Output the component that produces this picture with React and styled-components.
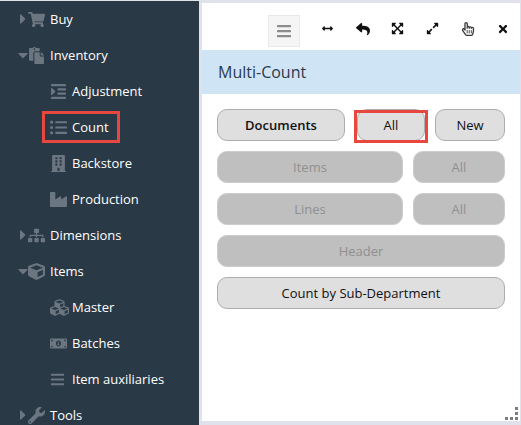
import React from 'react';
import styled, { createGlobalStyle } from 'styled-components';
import {
  FaArrowsAltH,
  FaBars,
  FaBuilding,
  FaCaretDown,
  FaCaretRight,
  FaCube,
  FaCubes,
  FaExpandAlt,
  FaExpandArrowsAlt,
  FaIndent,
  FaIndustry,
  FaListUl,
  FaMoneyBillAlt,
  FaPaste,
  FaRegHandPointer,
  FaReply,
  FaShoppingCart,
  FaSitemap,
  FaTimes,
  FaWrench,
} from 'react-icons/fa';

const GlobalStyle = createGlobalStyle`
  html, body {
    margin: 0;
    padding: 0;
    background: #dfe2ea;
  }
  *, *::before, *::after {
    box-sizing: border-box;
  }
`;

const menu = [
  { label: 'Buy', icon: FaShoppingCart, caret: 'right' },
  { label: 'Inventory', icon: FaPaste, caret: 'down' },
  { label: 'Adjustment', icon: FaIndent },
  { label: 'Count', icon: FaListUl, marked: true },
  { label: 'Backstore', icon: FaBuilding },
  { label: 'Production', icon: FaIndustry },
  { label: 'Dimensions', icon: FaSitemap, caret: 'right' },
  { label: 'Items', icon: FaCube, caret: 'down' },
  { label: 'Master', icon: FaCubes, size: 19 },
  { label: 'Batches', icon: FaMoneyBillAlt },
  { label: 'Item auxiliaries', icon: FaBars, size: 15 },
  { label: 'Tools', icon: FaWrench, caret: 'right' },
];

const tools = [
  { icon: FaArrowsAltH, size: 11 },
  { icon: FaReply, size: 14 },
  { icon: FaExpandArrowsAlt, size: 13 },
  { icon: FaExpandAlt, size: 13 },
  { icon: FaRegHandPointer, size: 14, color: '#3a3a3a' },
  { icon: FaTimes, size: 12 },
];

const App = () => {
  return (
    <Page>
      <GlobalStyle />
      <Sidebar>
        {menu.map((item) => {
          const Icon = item.icon;
          const Caret = item.caret === 'down' ? FaCaretDown : FaCaretRight;
          return (
            <MenuRow key={item.label} $child={!item.caret}>
              {item.caret && (
                <CaretSlot>
                  <Caret />
                </CaretSlot>
              )}
              <MenuEntry $marked={item.marked}>
                <IconSlot $child={!item.caret} $size={item.size}>
                  <Icon />
                </IconSlot>
                {item.label}
              </MenuEntry>
            </MenuRow>
          );
        })}
      </Sidebar>
      <Panel>
        <Toolbar>
          <MenuButton>
            <FaBars />
          </MenuButton>
          <ToolIcons>
            {tools.map((tool, i) => {
              const Icon = tool.icon;
              return (
                <ToolIcon key={i} $size={tool.size} $color={tool.color}>
                  <Icon />
                </ToolIcon>
              );
            })}
          </ToolIcons>
        </Toolbar>
        <Title>Multi-Count</Title>
        <Actions>
          <ActionRow $columns="128px 70px 70px">
            <Action $bold>Documents</Action>
            <Action $marked>All</Action>
            <Action>New</Action>
          </ActionRow>
          <ActionRow $columns="186px 92px">
            <Action disabled>Items</Action>
            <Action disabled>All</Action>
          </ActionRow>
          <ActionRow $columns="186px 92px">
            <Action disabled>Lines</Action>
            <Action disabled>All</Action>
          </ActionRow>
          <ActionRow $columns="1fr">
            <Action disabled>Header</Action>
          </ActionRow>
          <ActionRow $columns="1fr">
            <Action>Count by Sub-Department</Action>
          </ActionRow>
        </Actions>
        <Grip viewBox="0 0 13 13" aria-hidden="true">
          <rect x="10" y="0" width="3" height="3" />
          <rect x="10" y="5" width="3" height="3" />
          <rect x="5" y="10" width="3" height="3" />
          <rect x="0" y="10" width="3" height="3" />
          <rect x="10" y="10" width="3" height="3" />
        </Grip>
      </Panel>
    </Page>
  );
};

export default App;

const Page = styled.div`
  display: flex;
  width: 521px;
  height: 425px;
  overflow: hidden;
  background: #dfe2ea;
  font-family: 'Open Sans', sans-serif;
  font-size: 13px;
`;

const Sidebar = styled.nav`
  flex: 0 0 199px;
  margin-top: 1px;
  background: #2a3946;
  color: #fff;
`;

const MenuRow = styled.div`
  display: flex;
  align-items: center;
  height: 36px;
  padding-left: ${(p) => (p.$child ? '45px' : '17px')};
`;

const CaretSlot = styled.span`
  display: flex;
  justify-content: center;
  width: 11px;
  font-size: 16px;
  color: #6b7680;

  svg {
    flex: none;
  }
`;

const MenuEntry = styled.span`
  position: relative;
  display: flex;
  align-items: center;
  height: 26px;

  ${(p) =>
    p.$marked &&
    `
    &::after {
      content: '';
      position: absolute;
      left: -3px;
      top: -3px;
      width: 78px;
      height: 32px;
      border: 3px solid #e8473f;
    }
  `}
`;

const IconSlot = styled.span`
  display: flex;
  align-items: center;
  width: ${(p) => (p.$child ? '27px' : '22px')};
  padding-left: ${(p) => (p.$child ? '5px' : '0')};
  font-size: ${(p) => p.$size || 17}px;
  color: #6b7680;

  svg {
    flex: none;
  }
`;

const Panel = styled.main`
  position: relative;
  flex: 0 0 318px;
  margin: 3px 0 4px 3px;
  background: #fff;
`;

const Toolbar = styled.div`
  display: flex;
  align-items: flex-end;
  height: 47px;
  padding: 0 0 3px 66px;
`;

const MenuButton = styled.button`
  display: flex;
  align-items: center;
  justify-content: center;
  width: 32px;
  height: 32px;
  padding: 0;
  border: 1px solid #e8e8e8;
  background: #f5f5f5;
  color: #8c8c8c;
  font-size: 16px;
`;

const ToolIcons = styled.div`
  display: flex;
  align-self: stretch;
  margin-left: 10px;
`;

const ToolIcon = styled.span`
  display: flex;
  align-items: center;
  justify-content: center;
  width: 35px;
  padding-top: 7px;
  font-size: ${(p) => p.$size}px;
  color: ${(p) => p.$color || '#111'};
`;

const Title = styled.h1`
  margin: 0;
  height: 44px;
  padding-left: 16px;
  background: #cfe5f5;
  color: #2b3a4d;
  font-size: 16px;
  font-weight: 400;
  line-height: 44px;
`;

const Actions = styled.div`
  display: flex;
  flex-direction: column;
  gap: 10px;
  padding: 15px 15px 0;
`;

const ActionRow = styled.div`
  display: grid;
  grid-template-columns: ${(p) => p.$columns};
  gap: 10px;
`;

const Action = styled.button`
  position: relative;
  height: 32px;
  margin-left: ${(p) => (p.$marked ? '2px' : '0')};
  padding: 0;
  border: 1px solid #adadad;
  border-radius: 10px;
  background: #dfdfdf;
  color: #111;
  font-family: inherit;
  font-size: 13px;
  font-weight: ${(p) => (p.$bold ? 600 : 400)};

  &:disabled {
    border-color: #cccccc;
    background: #bfbfbf;
    color: #8f8f8f;
  }

  ${(p) =>
    p.$marked &&
    `
    &::after {
      content: '';
      position: absolute;
      left: -4px;
      top: 0;
      width: 74px;
      height: 33px;
      border: 3px solid #e8473f;
    }
  `}
`;

const Grip = styled.svg`
  position: absolute;
  right: 2px;
  bottom: 1px;
  width: 13px;
  height: 13px;
  fill: #7d7d7d;
`;
